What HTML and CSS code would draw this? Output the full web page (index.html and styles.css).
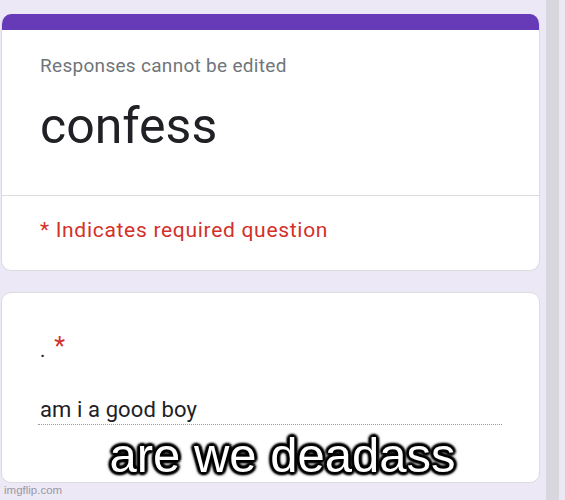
FILE: index.html
```html
<!DOCTYPE html>
<html lang="en">
<head>
<meta charset="utf-8">
<title>confess</title>
<link rel="stylesheet" href="styles.css">
</head>
<body>
<div class="page">
  <main class="main">
    <section class="card card-head">
      <div class="accent"></div>
      <div class="head-top">
        <div class="note">Responses cannot be edited</div>
        <h1 class="title">confess</h1>
      </div>
      <div class="head-bottom">
        <div class="required">* Indicates required question</div>
      </div>
    </section>
    <section class="card card-question">
      <div class="q-title">.<span class="star">*</span></div>
      <div class="answer">am i a good boy</div>
    </section>
  </main>
  <div class="gutter"></div>
  <div class="scrollbar"></div>
  <div class="edge"></div>
</div>
<div class="meme">are we deadass</div>
<div class="watermark">imgflip.com</div>
</body>
</html>
```

FILE: styles.css
```css
html, body {
  margin: 0;
  padding: 0;
}
body {
  width: 565px;
  height: 500px;
  overflow: hidden;
  background: #ede8f6;
  font-family: Roboto, "Liberation Sans", sans-serif;
  position: relative;
}
.page {
  display: flex;
  height: 500px;
}
.main {
  width: 539px;
  margin-left: 1px;
  padding-top: 14px;
  display: flex;
  flex-direction: column;
  gap: 21px;
  box-sizing: border-box;
}
.gutter {
  width: 6px;
}
.scrollbar {
  width: 13px;
  background: #d8d7de;
}
.edge {
  flex: 1;
  background: #ebe8f3;
}
.card {
  background: #fff;
  border: 1px solid #dadce0;
  border-radius: 10px;
  overflow: hidden;
}
.card-head {
  border-top: 0;
}
.accent {
  height: 16px;
  background: #673ab7;
}
.head-top {
  padding: 24px 38px 39px;
  border-bottom: 1px solid #dadce0;
}
.note {
  font-size: 19px;
  line-height: 24px;
  color: #70757a;
  letter-spacing: 0.3px;
}
.title {
  margin: 18px 0 0;
  font-size: 50px;
  line-height: 60px;
  font-weight: 400;
  color: #202124;
}
.head-bottom {
  padding: 20px 38px 26px;
}
.required {
  font-size: 21px;
  line-height: 28px;
  letter-spacing: 0.7px;
  color: #d3302a;
}
.card-question {
  padding: 43px 38px 57px;
}
.q-title {
  font-size: 20px;
  line-height: 28px;
  color: #202124;
}
.star {
  color: #d3302a;
  padding-left: 9px;
  font-size: 25px;
  line-height: 20px;
  vertical-align: 2px;
}
.answer {
  box-sizing: border-box;
  margin-top: 33px;
  margin-left: -2px;
  padding-left: 2px;
  width: 464px;
  font-size: 22px;
  line-height: 26px;
  letter-spacing: 0.1px;
  padding-bottom: 1px;
  color: #202124;
  border-bottom: 1px dotted #9a9a9a;
}
.meme {
  position: absolute;
  left: 0;
  top: 431px;
  width: 565px;
  text-align: center;
  font-family: "Liberation Sans", Arial, sans-serif;
  font-size: 49px;
  line-height: 48px;
  color: #fff;
  text-shadow:
    -2px -2px 2px #000, 2px -2px 2px #000, -2px 2px 2px #000, 2px 2px 2px #000,
    0 -3px 2px #000, 0 3px 2px #000, -3px 0 2px #000, 3px 0 2px #000,
    0 0 5px #000, 0 0 5px #000;
}
.watermark {
  position: absolute;
  left: 4px;
  top: 484px;
  font-family: "Liberation Sans", Arial, sans-serif;
  font-size: 11.5px;
  line-height: 13px;
  color: #9a98a3;
}
```
